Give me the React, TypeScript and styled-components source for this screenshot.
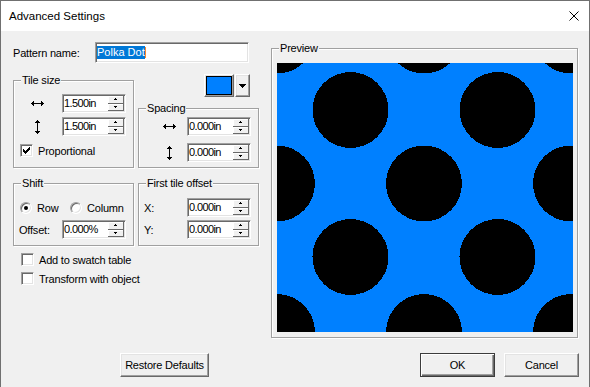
import React from "react";
import styled, { createGlobalStyle, css } from "styled-components";

const GlobalStyle = createGlobalStyle`
  html, body { margin: 0; padding: 0; background: #f0f0f0; }
  body {
    font-family: "Liberation Sans", Arial, sans-serif;
    font-size: 11px;
    letter-spacing: -0.2px;
    color: #000;
  }
  *, *::before, *::after { box-sizing: border-box; }
`;

const sunken = css`
  border: 1px solid;
  border-color: #a0a0a0 #ffffff #ffffff #a0a0a0;
  box-shadow: inset 1px 1px 0 #696969, inset -1px -1px 0 #e3e3e3;
`;

const raised = css`
  border: 1px solid;
  border-color: #ffffff #696969 #696969 #ffffff;
  box-shadow: inset -1px -1px 0 #a0a0a0, inset 1px 1px 0 #e3e3e3;
`;

const Window = styled.div`
  width: 590px;
  height: 387px;
  border: 1px solid #707070;
  border-bottom: 0;
  background: #f0f0f0;
  display: flex;
  flex-direction: column;
  overflow: hidden;
`;

const TitleBar = styled.div`
  height: 30px;
  flex: none;
  background: #ffffff;
  display: flex;
  align-items: center;
  justify-content: space-between;
  padding: 0 10px 0 8px;
`;

const Title = styled.span`
  font-size: 11.5px;
  letter-spacing: 0;
  line-height: 14px;
`;

const Main = styled.div`
  display: flex;
  align-items: flex-start;
  gap: 12px;
  padding: 0 11px 0 12px;
`;

const LeftColumn = styled.div`
  width: 246px;
  flex: none;
  padding-top: 11px;
  display: flex;
  flex-direction: column;
`;

const NameRow = styled.div`
  display: flex;
  align-items: center;
  height: 21px;
`;

const NameLabel = styled.span`
  width: 82px;
  flex: none;
`;

const NameInput = styled.div`
  width: 154px;
  height: 21px;
  background: #fff;
  ${sunken};
  padding: 1px;
  display: flex;
  align-items: center;
`;

const Selected = styled.span`
  background: #0078d7;
  color: #fff;
  line-height: 13px;
  letter-spacing: 0;
`;

const Caret = styled.span`
  width: 1px;
  height: 11px;
  background: #ff8728;
`;

const GroupGrid = styled.div`
  display: grid;
  grid-template-columns: 121px 121px;
  column-gap: 4px;
  row-gap: 15px;
  margin-top: 11px;
  align-items: start;
`;

const Stack = styled.div`
  display: flex;
  flex-direction: column;
`;

const Group = styled.div<{ $h: number; $pt: number; $mt?: number }>`
  position: relative;
  height: ${(p) => p.$h}px;
  margin-top: ${(p) => p.$mt ?? 0}px;
  padding-top: ${(p) => p.$pt}px;
  border: 1px solid #a0a0a0;
  box-shadow: inset 1px 1px 0 #fff, 1px 1px 0 #fff;
  display: flex;
  flex-direction: column;
`;

const GroupLabel = styled.span`
  position: absolute;
  top: -7px;
  left: 7px;
  padding: 0 1px;
  background: #f0f0f0;
  line-height: 13px;
`;

const Row = styled.div<{ $mt?: number }>`
  display: flex;
  align-items: center;
  height: 19px;
  margin-top: ${(p) => p.$mt ?? 0}px;
`;

const IconCell = styled.span<{ $pl: number }>`
  width: 48px;
  flex: none;
  padding-left: ${(p) => p.$pl}px;
  display: flex;
  align-items: center;
`;

const IconBox = styled.span`
  width: 14px;
  display: flex;
  justify-content: center;
  align-items: center;
`;

const LabelCell = styled.span`
  width: 48px;
  flex: none;
  padding-left: 5px;
`;

const Field = styled.div`
  width: 64px;
  height: 19px;
  flex: none;
  background: #fff;
  ${sunken};
  padding: 1px;
  display: flex;
  align-items: stretch;
`;

const FieldText = styled.span`
  flex: 1;
  display: flex;
  align-items: center;
  letter-spacing: -0.6px;
  line-height: 13px;
`;

const Spin = styled.div`
  width: 16px;
  flex: none;
  display: flex;
  flex-direction: column;
`;

const SpinButton = styled.div`
  flex: 1;
  background: #f0f0f0;
  border-right: 1px solid #696969;
  border-bottom: 1px solid #696969;
  box-shadow: inset 1px 1px 0 #fff;
  display: flex;
  align-items: center;
  justify-content: center;
`;

const CheckRow = styled.label<{ $pl?: number; $mt?: number }>`
  display: flex;
  align-items: center;
  gap: 5px;
  height: 13px;
  padding-left: ${(p) => p.$pl ?? 0}px;
  margin-top: ${(p) => p.$mt ?? 0}px;
`;

const Box = styled.span`
  width: 13px;
  height: 13px;
  flex: none;
  background: #fff;
  ${sunken};
  display: flex;
  align-items: center;
  justify-content: center;
`;

const RadioRow = styled.div`
  display: flex;
  align-items: center;
  height: 19px;
  padding-left: 6px;
`;

const RadioOption = styled.span<{ $w?: number }>`
  display: flex;
  align-items: center;
  gap: 5px;
  width: ${(p) => (p.$w ? `${p.$w}px` : "auto")};
`;

const RadioCircle = styled.span`
  width: 12px;
  height: 12px;
  flex: none;
  border-radius: 50%;
  background: #fff;
  ${sunken};
  display: flex;
  align-items: center;
  justify-content: center;
`;

const RadioDot = styled.span`
  width: 4px;
  height: 4px;
  border-radius: 50%;
  background: #000;
`;

const SwatchRow = styled.div`
  display: flex;
  justify-content: flex-end;
  gap: 1px;
  height: 23px;
  padding-right: 9px;
  margin-bottom: 11px;
`;

const SwatchButton = styled.div`
  width: 30px;
  height: 23px;
  background: #f0f0f0;
  ${raised};
  padding: 1px;
  display: flex;
`;

const SwatchColor = styled.span`
  flex: 1;
  border: 1px solid #000;
  background: #0080ff;
`;

const DropButton = styled.div`
  width: 15px;
  height: 23px;
  background: #f0f0f0;
  ${raised};
  display: flex;
  align-items: center;
  justify-content: center;
`;

const Checks = styled.div`
  display: flex;
  flex-direction: column;
  margin-top: 7px;
  padding-left: 8px;
`;

const Preview = styled.div`
  position: relative;
  width: 307px;
  height: 290px;
  flex: none;
  margin-top: 17px;
  padding: 14px 4px 5px 5px;
  border: 1px solid #a0a0a0;
  box-shadow: inset 1px 1px 0 #fff, 1px 1px 0 #fff;
  display: flex;
`;

const Footer = styled.div`
  display: flex;
  align-items: center;
  gap: 9px;
  padding: 15px 10px 0 119px;
`;

const Spacer = styled.span`
  flex: 1;
`;

const Button = styled.div<{ $w: number; $default?: boolean }>`
  width: ${(p) => p.$w}px;
  height: 24px;
  background: #f0f0f0;
  display: flex;
  align-items: center;
  justify-content: center;
  ${(p) =>
    p.$default
      ? css`
          border: 1px solid #3c3c3c;
          box-shadow: inset 1px 1px 0 #fff, inset -1px -1px 0 #696969,
            inset -2px -2px 0 #a0a0a0;
        `
      : raised};
`;

const HArrow = () => (
  <svg width="13" height="5" viewBox="0 0 13 5" shapeRendering="crispEdges">
    <path d="M0 2h13v1h-13z M1 1h1v3h-1z M2 0h1v5h-1z M11 1h1v3h-1z M10 0h1v5h-1z" fill="#000" />
  </svg>
);

const VArrow = () => (
  <svg width="5" height="14" viewBox="0 0 5 14" shapeRendering="crispEdges">
    <path d="M2 0h1v14h-1z M1 1h3v1h-3z M0 2h5v1h-5z M1 12h3v1h-3z M0 11h5v1h-5z" fill="#000" />
  </svg>
);

const UpTri = () => (
  <svg width="3" height="2" viewBox="0 0 3 2" shapeRendering="crispEdges">
    <path d="M1 0h1v1h1v1h-3v-1h1z" fill="#000" />
  </svg>
);

const DownTri = () => (
  <svg width="3" height="2" viewBox="0 0 3 2" shapeRendering="crispEdges">
    <path d="M0 0h3v1h-1v1h-1v-1h-1z" fill="#000" />
  </svg>
);

const CheckMark = () => (
  <svg width="7" height="7" viewBox="0 0 7 7" shapeRendering="crispEdges">
    <path
      d="M0 2h1v3h-1z M1 3h1v3h-1z M2 4h1v3h-1z M3 3h1v3h-1z M4 2h1v3h-1z M5 1h1v3h-1z M6 0h1v3h-1z"
      fill="#000"
    />
  </svg>
);

const CloseIcon = () => (
  <svg width="10" height="10" viewBox="0 0 10 10">
    <path d="M0.5 0.5L9.5 9.5M9.5 0.5L0.5 9.5" stroke="#000" strokeWidth="1" />
  </svg>
);

const SpinField = ({ value }: { value: string }) => (
  <Field>
    <FieldText>{value}</FieldText>
    <Spin>
      <SpinButton>
        <UpTri />
      </SpinButton>
      <SpinButton>
        <DownTri />
      </SpinButton>
    </Spin>
  </Field>
);

const Check = ({ checked, label, pl, mt }: { checked?: boolean; label: string; pl?: number; mt?: number }) => (
  <CheckRow $pl={pl} $mt={mt}>
    <Box>{checked && <CheckMark />}</Box>
    <span>{label}</span>
  </CheckRow>
);

const PolkaPattern = () => {
  const r = 38;
  const oddRows = [-27.5, 120.5, 269];
  const evenRows = [47, 194];
  const oddCols = [0, 147, 294];
  const evenCols = [73.5, 220.5];
  const dots: Array<[number, number]> = [];
  oddRows.forEach((y) => oddCols.forEach((x) => dots.push([x, y])));
  evenRows.forEach((y) => evenCols.forEach((x) => dots.push([x, y])));
  return (
    <svg width="296" height="269" viewBox="0 0 296 269" shapeRendering="crispEdges">
      <rect width="296" height="269" fill="#0080ff" />
      {dots.map(([x, y], i) => (
        <circle key={i} cx={x} cy={y} r={r} fill="#000" />
      ))}
    </svg>
  );
};

export default function App() {
  return (
    <>
      <GlobalStyle />
      <Window>
        <TitleBar>
          <Title>Advanced Settings</Title>
          <CloseIcon />
        </TitleBar>
        <Main>
          <LeftColumn>
            <NameRow>
              <NameLabel>Pattern name:</NameLabel>
              <NameInput>
                <Selected>Polka Dot</Selected>
                <Caret />
              </NameInput>
            </NameRow>
            <GroupGrid>
              <Group $h={88} $pt={13} $mt={6}>
                <GroupLabel>Tile size</GroupLabel>
                <Row>
                  <IconCell $pl={16}>
                    <IconBox>
                      <HArrow />
                    </IconBox>
                  </IconCell>
                  <SpinField value="1.500in" />
                </Row>
                <Row $mt={4}>
                  <IconCell $pl={16}>
                    <IconBox>
                      <VArrow />
                    </IconBox>
                  </IconCell>
                  <SpinField value="1.500in" />
                </Row>
                <Check checked label="Proportional" pl={6} mt={8} />
              </Group>
              <Stack>
                <SwatchRow>
                  <SwatchButton>
                    <SwatchColor />
                  </SwatchButton>
                  <DropButton>
                    <svg width="7" height="4" viewBox="0 0 7 4" shapeRendering="crispEdges">
                      <path d="M0 0h7v1h-1v1h-1v1h-1v1h-1v-1h-1v-1h-1v-1h-1z" fill="#000" />
                    </svg>
                  </DropButton>
                </SwatchRow>
                <Group $h={60} $pt={8}>
                  <GroupLabel>Spacing</GroupLabel>
                  <Row>
                    <IconCell $pl={23}>
                      <IconBox>
                        <HArrow />
                      </IconBox>
                    </IconCell>
                    <SpinField value="0.000in" />
                  </Row>
                  <Row $mt={7}>
                    <IconCell $pl={23}>
                      <IconBox>
                        <VArrow />
                      </IconBox>
                    </IconCell>
                    <SpinField value="0.000in" />
                  </Row>
                </Group>
              </Stack>
              <Group $h={63} $pt={14}>
                <GroupLabel>Shift</GroupLabel>
                <RadioRow>
                  <RadioOption $w={50}>
                    <RadioCircle>
                      <RadioDot />
                    </RadioCircle>
                    <span>Row</span>
                  </RadioOption>
                  <RadioOption>
                    <RadioCircle />
                    <span>Column</span>
                  </RadioOption>
                </RadioRow>
                <Row $mt={3}>
                  <LabelCell>Offset:</LabelCell>
                  <SpinField value="0.000%" />
                </Row>
              </Group>
              <Group $h={63} $pt={14}>
                <GroupLabel>First tile offset</GroupLabel>
                <Row>
                  <LabelCell>X:</LabelCell>
                  <SpinField value="0.000in" />
                </Row>
                <Row $mt={3}>
                  <LabelCell>Y:</LabelCell>
                  <SpinField value="0.000in" />
                </Row>
              </Group>
            </GroupGrid>
            <Checks>
              <Check label="Add to swatch table" />
              <Check label="Transform with object" mt={6} />
            </Checks>
          </LeftColumn>
          <Preview>
            <GroupLabel>Preview</GroupLabel>
            <PolkaPattern />
          </Preview>
        </Main>
        <Footer>
          <Button $w={89}>Restore Defaults</Button>
          <Spacer />
          <Button $w={75} $default>
            OK
          </Button>
          <Button $w={75}>Cancel</Button>
        </Footer>
      </Window>
    </>
  );
}
